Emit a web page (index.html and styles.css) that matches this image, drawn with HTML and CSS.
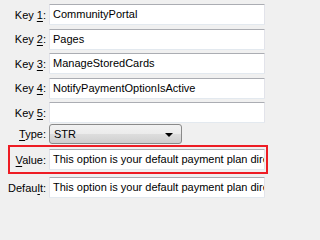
FILE: index.html
```html
<!DOCTYPE html>
<html>
<head>
<meta charset="utf-8">
<link rel="stylesheet" href="styles.css">
</head>
<body>
<div class="form">
  <div class="row"><span class="label">Key <u>1</u>:</span><div class="field">CommunityPortal</div></div>
  <div class="row"><span class="label">Key <u>2</u>:</span><div class="field">Pages</div></div>
  <div class="row"><span class="label">Key <u>3</u>:</span><div class="field">ManageStoredCards</div></div>
  <div class="row"><span class="label">Key <u>4</u>:</span><div class="field">NotifyPaymentOptionIsActive</div></div>
  <div class="row"><span class="label">Key <u>5</u>:</span><div class="field"></div></div>
  <div class="row type-row"><span class="label"><u>T</u>ype:</span><div class="select"><span>STR</span><span class="arrow"></span></div></div>
  <div class="row highlight"><span class="label"><u>V</u>alue:</span><div class="field">This option is your default payment plan directly</div></div>
  <div class="row default-row"><span class="label">Defau<u>l</u>t:</span><div class="field">This option is your default payment plan directly</div></div>
</div>
</body>
</html>
```
FILE: styles.css
```css
html, body {
  margin: 0;
  padding: 0;
  background: #f0f0f0;
}
body {
  font-family: "Liberation Sans", Arial, sans-serif;
  font-size: 11px;
  color: #000;
  overflow: hidden;
}
.form {
  width: 270px;
  box-sizing: border-box;
  display: flex;
  flex-direction: column;
  gap: 3.5px;
  padding: 4px 5px 0 0;
}
.row {
  display: flex;
  align-items: center;
  gap: 3px;
}
.type-row {
  margin-top: -2.5px;
}
.highlight {
  margin-top: 1.5px;
}
.default-row {
  margin-top: 3.5px;
}
.label {
  width: 46px;
  flex: none;
  text-align: right;
  white-space: nowrap;
}
.label u {
  text-decoration-thickness: 1px;
  text-underline-offset: 2px;
}
.field {
  flex: 1;
  min-width: 0;
  height: 21px;
  box-sizing: border-box;
  background: #fff;
  border: 1px solid;
  border-color: #abadb3 #e2e3ea #e3e9ef #e2e3ea;
  border-radius: 1px;
  padding: 0 3px;
  line-height: 19px;
  white-space: nowrap;
  overflow: hidden;
}
.select {
  width: 133px;
  height: 20px;
  box-sizing: border-box;
  border: 1px solid #8a8a8a;
  border-radius: 3px;
  background: linear-gradient(#f2f2f2 0%, #ebebeb 50%, #dddddd 51%, #cfcfcf 100%);
  display: flex;
  align-items: center;
  justify-content: space-between;
  padding: 0 8px 0 4px;
}
.arrow {
  width: 0;
  height: 0;
  border-left: 4px solid transparent;
  border-right: 4px solid transparent;
  border-top: 4px solid #000;
  margin-top: 1px;
}
.highlight {
  position: relative;
}
.highlight::before {
  content: "";
  position: absolute;
  left: 8px;
  right: -3px;
  top: -4px;
  bottom: -4px;
  border: 2px solid #ee1c24;
  pointer-events: none;
}
```
